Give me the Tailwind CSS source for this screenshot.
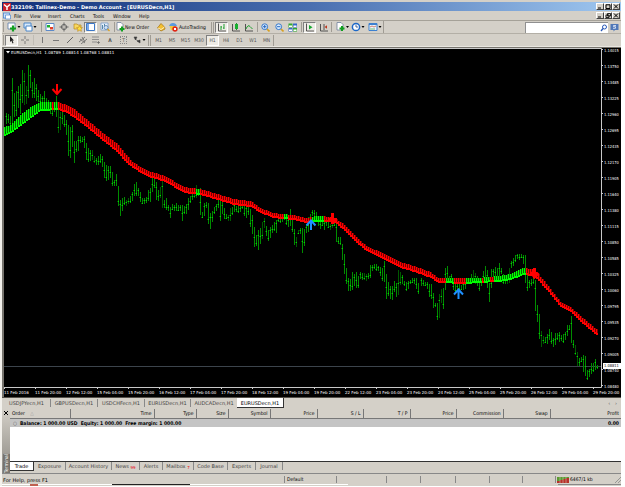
<!DOCTYPE html>
<html lang="en">
<head>
  <meta charset="UTF-8" />
  <meta name="viewport" content="width=device-width, initial-scale=1.0" />
  <title>332109: Tallinex-Demo - Demo Account - [EURUSDecn,H1]</title>
  <script src="https://cdn.jsdelivr.net/npm/@tailwindcss/browser@4"></script>
</head>
<body class="bg-white pr-1 font-['DejaVu_Sans_Condensed','DejaVu_Sans',sans-serif] text-[5px] leading-[8px] text-black">
<div class="bg-[#d4d0c8] border-l-2 border-[#f3f1ec]">

  <!-- Title bar -->
  <header class="pt-[2px]">
    <div class="h-[9px] flex items-center bg-linear-to-r from-[#12307a] via-[#4a6fb0] to-[#a0c8f0] text-white font-bold font-['DejaVu_Sans',sans-serif] px-px">
      <svg class="w-2 h-2" viewBox="0 0 8 8"><rect width="8" height="8" fill="#c8202c"/><path d="M1 1.500l3 2.500 3-2.500M4 4v3" stroke="#fff" stroke-width="1.500" fill="none"/></svg>
      <h1 class="flex-1 whitespace-nowrap">332109: Tallinex-Demo - Demo Account - [EURUSDecn,H1]</h1>
      <div class="flex">
        <button aria-label="Minimize" class="w-2 h-[7px] bg-[#d4d0c8] border border-t-white border-l-white border-r-[#404040] border-b-[#404040]"><svg viewBox="0 0 6 5"><path d="M1 4h3" stroke="#000"/></svg></button>
        <button aria-label="Maximize" class="w-2 h-[7px] bg-[#d4d0c8] border border-t-white border-l-white border-r-[#404040] border-b-[#404040]"><svg viewBox="0 0 6 5"><path d="M1 .8h4v3.700H1z" stroke="#000" fill="none"/></svg></button>
        <button aria-label="Close" class="w-2 h-[7px] bg-[#d4d0c8] border border-t-white border-l-white border-r-[#404040] border-b-[#404040]"><svg viewBox="0 0 6 5"><path d="M1 .5l4 4M5 .5l-4 4" stroke="#000"/></svg></button>
      </div>
    </div>
  </header>

  <!-- Menu -->
  <nav class="h-[10px] flex items-center border-b border-[#a5a198] px-px">
    <svg class="w-2 h-2 mr-[3px]" viewBox="0 0 8 8"><rect x=".5" y="1" width="6" height="5" fill="#cfe2fa" stroke="#4a86d0" stroke-width=".8"/><path d="M2.500 3h5v4h-5z" fill="#fff" stroke="#4a86d0" stroke-width=".7"/></svg>
    <a href="#" class="w-4">File</a>
    <a href="#" class="w-[18px]">View</a>
    <a href="#" class="w-[22px]">Insert</a>
    <a href="#" class="w-[23px]">Charts</a>
    <a href="#" class="w-5">Tools</a>
    <a href="#" class="w-[26px]">Window</a>
    <a href="#" class="flex-1">Help</a>
    <div class="flex">
      <button aria-label="Minimize chart" class="w-2 h-[7px] border border-t-white border-l-white border-r-[#404040] border-b-[#404040]"><svg viewBox="0 0 6 5"><path d="M1 4h3" stroke="#000"/></svg></button>
      <button aria-label="Restore chart" class="w-2 h-[7px] border border-t-white border-l-white border-r-[#404040] border-b-[#404040]"><svg viewBox="0 0 6 5"><path d="M2.500.5h3v2.500h-3zM1 2h3v2.500H1z" stroke="#000" stroke-width=".8" fill="none"/></svg></button>
      <button aria-label="Close chart" class="w-2 h-[7px] border border-t-white border-l-white border-r-[#404040] border-b-[#404040]"><svg viewBox="0 0 6 5"><path d="M1 .5l4 4M5 .5l-4 4" stroke="#000"/></svg></button>
    </div>
  </nav>

  <!-- Main toolbar -->
  <div class="h-[13px] flex items-center border-b border-[#b3afa6]">
    <i class="w-px h-[10px] mx-px bg-[#a09c94]"></i>
    <button aria-label="New chart" class="w-[18px] pl-[2px]"><svg class="w-[14px] h-[10px]" viewBox="0 0 14 10"><path d="M1 1h7v6H1z" fill="#fff" stroke="#5a7ca8" stroke-width=".8"/><path d="M6 3.500v6M3 6.500h6" stroke="#12a020" stroke-width="2.200"/><path d="M10.500 4h3L12 6z"/></svg></button>
    <button aria-label="Profiles" class="w-[17px]"><svg class="w-[14px] h-[10px]" viewBox="0 0 14 10"><path d="M1 1h7v5H1z" fill="#d8eafc" stroke="#4a86c8"/><path d="M3 4h6v5H3z" fill="#fff" stroke="#4a86c8"/><path d="M10.500 4h3L12 6z"/></svg></button>
    <i class="w-px h-[10px] mx-px bg-[#a09c94]"></i>
    <button aria-label="Market watch" class="w-[14px] flex justify-center"><svg class="w-[10px] h-[10px]" viewBox="0 0 10 10"><path d="M1 1.500h8v7H1z" fill="#fff" stroke="#5c8ac8"/><path d="M2 3h3v2.500H2z" fill="#20b030"/><path d="M5 5h3v2.500H5z" fill="#e04028"/></svg></button>
    <button aria-label="Data window" class="w-[14px] flex justify-center"><svg class="w-[10px] h-[10px]" viewBox="0 0 10 10"><circle cx="5" cy="5" r="2.600" fill="none" stroke="#666"/><path d="M5 .5v9M.5 5h9" stroke="#666"/><circle cx="5" cy="5" r="1" fill="#d4d0c8"/></svg></button>
    <button aria-label="Navigator" class="w-[13px] flex justify-center"><svg class="w-[10px] h-[10px]" viewBox="0 0 10 10"><path d="M1 2h3l1 1h3v4H1z" fill="#f8d860" stroke="#b88a20" stroke-width=".7"/><path d="M6.500 3.500l.9 1.900 2.100.2-1.500 1.500.4 2.200-1.900-1-1.900 1 .4-2.200L3.500 5.600l2.100-.2z" fill="#ffe040" stroke="#c08820" stroke-width=".6"/></svg></button>
    <button aria-label="Terminal" class="w-[13px] h-[11px] flex justify-center items-center bg-[#eeece6] border border-t-[#808080] border-l-[#808080] border-white"><svg class="w-[9px] h-[8px]" viewBox="0 0 9 8"><path d="M.5.5h8v7h-8z" fill="#fff" stroke="#3c78c8"/><path d="M1 1h2v6H1z" fill="#7aa8e8"/></svg></button>
    <button aria-label="Strategy tester" class="w-[15px] flex justify-center"><svg class="w-[10px] h-[10px]" viewBox="0 0 10 10"><path d="M1 1h7v7H1z" fill="#e8f2fc" stroke="#7a9cc8" stroke-width=".8"/><path d="M2.500 3v4M4.500 2v3" stroke="#58a"/><circle cx="6" cy="5.500" r="2" fill="#cfe4fa" stroke="#5880b0" stroke-width=".8"/><path d="M7.500 7l2 2" stroke="#d8a020" stroke-width="1.300"/></svg></button>
    <i class="w-px h-[10px] mr-px ml-[2px] bg-[#a09c94]"></i>
    <button class="w-[38px] flex items-center whitespace-nowrap"><svg class="w-[9px] h-[10px]" viewBox="0 0 9 10"><path d="M1 .5h4l2 2V8H1z" fill="#fff" stroke="#70809c" stroke-width=".8"/><path d="M6 4.500v5M3.500 7h5" stroke="#12a020" stroke-width="2"/></svg>New Order</button>
    <button aria-label="MetaEditor" class="w-[14px] flex justify-center"><svg class="w-[10px] h-[10px]" viewBox="0 0 10 10"><path d="M1.500 6L5 1.500 8.500 5 9 7 5 9z" fill="#f4c030" stroke="#a87818" stroke-width=".8"/><path d="M2 6l3 1.500L8.500 5" stroke="#fff" stroke-width=".7" fill="none"/></svg></button>
    <button class="w-[43px] flex items-center whitespace-nowrap"><svg class="w-[10px] h-[10px] mr-px" viewBox="0 0 10 10"><path d="M1 4q1-3 4-3t4 3z" fill="#5a9ae0"/><path d="M1.500 4h6L7 8H3z" fill="#f4c838"/><circle cx="7" cy="7" r="2.700" fill="#e02818"/><path d="M6 6h2v2H6z" fill="#fff"/></svg>AutoTrading</button>
    <i class="w-px h-[11px] bg-[#a09c94]"></i><i class="w-px h-[11px] mx-px bg-[#a09c94]"></i>
    <button aria-label="Bar chart" class="w-[13px] h-[11px] flex justify-center items-center bg-[#eeece6] border border-t-[#808080] border-l-[#808080] border-white"><svg class="w-[9px] h-[9px]" viewBox="0 0 9 9"><path d="M1.500.5V8H9" stroke="#444" stroke-width=".9" fill="none"/><path d="M4 3v4M4 4h1M7 1v5M6 5h1" stroke="#20a030"/></svg></button>
    <button aria-label="Candlesticks" class="w-[14px] flex justify-center"><svg class="w-[9px] h-[9px]" viewBox="0 0 9 9"><path d="M1.500 1v7H9" stroke="#444" stroke-width=".9" fill="none"/><path d="M5.500 0v7" stroke="#0a6a18" stroke-width=".8"/><path d="M4 1h3v5H4z" fill="#18b030"/></svg></button>
    <button aria-label="Line chart" class="w-[13px] flex justify-center"><svg class="w-[9px] h-[9px]" viewBox="0 0 9 9"><path d="M1.500 1v7H9" stroke="#444" stroke-width=".9" fill="none"/><path d="M2 6q2-5 4-2.500L8.500 6" stroke="#20a030" fill="none"/></svg></button>
    <i class="w-px h-[10px] mr-px ml-[2px] bg-[#a09c94]"></i>
    <button aria-label="Zoom in" class="w-[13px] flex justify-center"><svg class="w-[9px] h-[9px]" viewBox="0 0 9 9"><path d="M5.500 5.500l3 3" stroke="#d8a020" stroke-width="1.600"/><circle cx="3.700" cy="3.700" r="2.900" fill="#d8ecff" stroke="#3878c8"/><path d="M3.700 2v3.400M2 3.700h3.400" stroke="#2868c0"/></svg></button>
    <button aria-label="Zoom out" class="w-[14px] flex justify-center"><svg class="w-[9px] h-[9px]" viewBox="0 0 9 9"><path d="M5.500 5.500l3 3" stroke="#d8a020" stroke-width="1.600"/><circle cx="3.700" cy="3.700" r="2.900" fill="#d8ecff" stroke="#3878c8"/><path d="M2 3.700h3.400" stroke="#2868c0"/></svg></button>
    <button aria-label="Tile windows" class="w-[13px] flex justify-center"><svg class="w-[9px] h-[9px]" viewBox="0 0 9 9"><path d="M.5.5h4v4h-4z" fill="#30a830"/><path d="M5 .5h4v4H5z" fill="#3468c8"/><path d="M.5 5h4v3.500h-4z" fill="#3468c8"/><path d="M5 5h4v3.500H5z" fill="#30a830"/><path d="M1 2.500h3v1.500H1zM5.500 2.500h3v1.500h-3zM1 6.500h3V8H1zM5.500 6.500h3V8h-3z" fill="#fff"/></svg></button>
    <i class="w-px h-[10px] mr-px ml-[2px] bg-[#a09c94]"></i>
    <button aria-label="Auto scroll" class="w-[13px] h-[11px] flex justify-center items-center bg-[#eeece6] border border-t-[#808080] border-l-[#808080] border-white"><svg class="w-[9px] h-[9px]" viewBox="0 0 9 9"><path d="M1.500.5V8H9" stroke="#444" stroke-width=".9" fill="none"/><path d="M4 2l3.500 2.300L4 6.600z" fill="#18a830"/></svg></button>
    <button aria-label="Chart shift" class="w-[14px] flex justify-center"><svg class="w-[9px] h-[9px]" viewBox="0 0 9 9"><path d="M1.500 1v7H9M5 1v6" stroke="#444" stroke-width=".9" fill="none"/><path d="M5.500 4L8 2.300v3.400z" fill="#c03820"/></svg></button>
    <i class="w-px h-[10px] mx-px bg-[#a09c94]"></i>
    <button aria-label="Indicators" class="w-[17px] flex justify-center"><svg class="w-[14px] h-[10px]" viewBox="0 0 14 10"><path d="M2 .5h4l2 2V8H2z" fill="#fff" stroke="#70809c" stroke-width=".8"/><path d="M7 4v5M4.500 6.500h5" stroke="#12a020" stroke-width="2"/><path d="M11 4h3l-1.500 2z"/></svg></button>
    <button aria-label="Periods" class="w-[16px] flex justify-center"><svg class="w-[14px] h-[10px]" viewBox="0 0 14 10"><circle cx="5" cy="5" r="3.600" fill="#fff" stroke="#1c68c8" stroke-width="1.500"/><path d="M5 2.700V5h2" stroke="#1c4888" stroke-width=".8" fill="none"/><path d="M10.500 4h3L12 6z"/></svg></button>
    <button aria-label="Templates" class="w-[17px] flex justify-center"><svg class="w-[14px] h-[10px]" viewBox="0 0 14 10"><path d="M1 1.500h8v7H1z" fill="#eaf4ff" stroke="#3c80d0"/><path d="M1 2.500h8" stroke="#3c80d0"/><path d="M2 5l2-1 2 1 2-1" stroke="#c05030" stroke-width=".7" fill="none"/><path d="M2 7h5" stroke="#30a040" stroke-width=".7"/><path d="M10.500 4h3L12 6z"/></svg></button>
    <i class="w-px h-[12px] bg-[#a09c94]"></i>
    <label class="ml-auto flex items-center bg-white border-t border-l border-[#909090] h-[11px] w-[83px]">
      <input type="text" aria-label="Search" class="min-w-0 flex-1 h-[8px] outline-none" />
      <svg class="w-[8px] h-[8px]" viewBox="0 0 8 8"><circle cx="4.500" cy="3" r="2" fill="#fff" stroke="#2858b8"/><path d="M3 4.500L1 7" stroke="#2858b8" stroke-width="1.300"/></svg>
    </label>
    <button aria-label="Messages" class="w-[13px] flex justify-center"><svg class="w-[9px] h-[9px]" viewBox="0 0 9 9"><path d="M.5 1h8v6H5L3.500 8.500V7h-3z" fill="#5078b8"/><path d="M6 2.500H3.500v1.200h2v1.600H3" stroke="#e8f0fc" stroke-width=".8" fill="none"/></svg></button>
  </div>

  <!-- Line studies and periods toolbar -->
  <div class="h-[13px] flex items-center text-[#555] border-b border-[#e8e6e0]">
    <i class="w-px h-[10px] mx-px bg-[#a09c94]"></i>
    <button aria-label="Cursor" class="w-[13px] h-[11px] flex justify-center items-center bg-[#eeece6] border border-t-[#808080] border-l-[#808080] border-white"><svg class="w-[7px] h-[8px]" viewBox="0 0 7 8"><path d="M2 0v6l1.400-1.200L4.500 7.500l1-.5-1-2.500H6z" fill="#222"/></svg></button>
    <button aria-label="Crosshair" class="w-[14px] flex justify-center"><svg class="w-[8px] h-[8px]" viewBox="0 0 8 8"><path d="M4 0v3M4 5v3M0 4h3M5 4h3" stroke="#666" stroke-width=".8"/></svg></button>
    <i class="w-px h-[10px] mx-px bg-[#c0bcb4]"></i>
    <button aria-label="Vertical line" class="w-[14px] flex justify-center"><svg class="w-[8px] h-[8px]" viewBox="0 0 8 8"><path d="M4.500 1v6" stroke="#777"/></svg></button>
    <button aria-label="Horizontal line" class="w-[14px] flex justify-center"><svg class="w-[8px] h-[8px]" viewBox="0 0 8 8"><path d="M1 4.500h6" stroke="#777"/></svg></button>
    <button aria-label="Trendline" class="w-[13px] flex justify-center"><svg class="w-[8px] h-[8px]" viewBox="0 0 8 8"><path d="M1 7l6-6" stroke="#666"/></svg></button>
    <button aria-label="Channel" class="w-[13px] flex justify-center"><svg class="w-[8px] h-[8px]" viewBox="0 0 8 8"><path d="M0 6l6-5M2 8l6-5M1 3l5 4M3 1l3 5" stroke="#666" stroke-width=".8"/></svg></button>
    <button aria-label="Fibonacci" class="w-[14px] flex justify-center"><svg class="w-[8px] h-[8px]" viewBox="0 0 8 8"><path d="M0 1h7M0 3.500h7M0 6h5" stroke="#888" stroke-width=".9"/><path d="M6.500 5v3M5 6.500h3" stroke="#666" stroke-width=".7"/></svg></button>
    <button class="w-[14px] font-bold">A</button>
    <button class="w-[13px] flex justify-center"><span class="w-[7px] h-[8px] leading-[6px] border border-dotted border-[#888]">T</span></button>
    <button aria-label="Arrows" class="w-[18px] flex justify-center"><svg class="w-[13px] h-[8px]" viewBox="0 0 13 8"><path d="M1 1l3 0-1.500 3zM2 3l3 2M4 5l3-1v3z" fill="#333" stroke="#444" stroke-width=".6"/><path d="M9.500 3h3L11 5z" fill="#000"/></svg></button>
    <i class="w-px h-[11px] bg-[#a09c94]"></i><i class="w-px h-[11px] mx-px bg-[#a09c94]"></i>
    <button class="w-[13px]">M1</button>
    <button class="w-[14px]">M5</button>
    <button class="w-[13px]">M15</button>
    <button class="w-[14px]">M30</button>
    <button class="w-[13px] h-[11px] leading-[8px] bg-[#eeece6] border border-t-[#808080] border-l-[#808080] border-white">H1</button>
    <button class="w-[14px]">H4</button>
    <button class="w-[13px]">D1</button>
    <button class="w-[14px]">W1</button>
    <button class="w-[13px]">MN</button>
    <i class="w-px h-[11px] bg-[#a09c94]"></i>
  </div>

  <!-- Chart -->
  <main class="bg-black border-t border-l-2 border-[#77746e]">
    <svg id="chart" class="block w-full h-auto" viewBox="4 48 617 349" font-family="'DejaVu Sans Condensed','DejaVu Sans',sans-serif" font-size="4" fill="#fff">
      <path d="M4 48.500H601.500V387.500H4" fill="none" stroke="#c8c8c8"/>
      <path d="M4 366.500H601" stroke="#3c444c"/>
      <path d="M6 51h4l-2 2.500z"/>
      <text x="11" y="54" font-family="'DejaVu Sans',sans-serif">EURUSDecn,H1&#160; 1.08789 1.08814 1.08768 1.08811</text>
      <g id="bars"></g>
      <g id="band"></g>
      <g fill="none" stroke="#ff0000" stroke-width="2">
        <path d="M57 84v9M52.500 89l4.500 5 4.500-5"/>
        <path d="M332.500 213v11M328 219.500h9" stroke-width="3"/>
        <path d="M534.500 268v10M531 272l3.500 5 4-4" stroke-width="3"/>
      </g>
      <g fill="none" stroke="#1e90ff" stroke-width="2">
        <path d="M311 230v-10M306.500 225.500l4.500-5 4.500 5"/>
        <path d="M458.500 299v-10M454 294.500l4.500-5 4.500 5"/>
      </g>
      <g id="prices"></g>
      <g id="dates"></g>
      <rect x="603" y="363" width="18" height="6"/>
      <text x="604" y="367" fill="#000">1.08811</text>
    </svg>
  </main>

  <!-- Chart tabs -->
  <nav class="h-3 flex items-start border-t border-[#55524c] font-['DejaVu_Sans',sans-serif] text-[#444] whitespace-nowrap">
    <a href="#" class="w-[48px] mt-px pl-[7px]">USDJPYecn,H1</a>
    <a href="#" class="w-[47px] mt-px text-center border-l border-[#888]">GBPUSDecn,H1</a>
    <a href="#" class="w-[47px] mt-px text-center border-l border-[#888]">USDCHFecn,H1</a>
    <a href="#" class="w-[46px] mt-px text-center border-l border-[#888]">EURUSDecn,H1</a>
    <a href="#" class="w-[47px] mt-px text-center border-l border-[#888]">AUDCADecn,H1</a>
    <a href="#" class="w-[47px] h-[10px] pt-px text-center bg-white text-black border-r border-b border-[#333]">EURUSDecn,H1</a>
    <span class="ml-auto mr-1 mt-px text-[#666]">‹ &nbsp; ›</span>
  </nav>

  <!-- Terminal -->
  <section class="flex">
    <aside class="w-2 shrink-0 flex flex-col items-center justify-between bg-linear-to-b from-[#d4d0c8] to-[#8c8982]">
      <button aria-label="Close terminal" class="w-[6px] h-[7px] flex items-center"><svg viewBox="0 0 6 6"><path d="M1 1l4 4M5 1L1 5" stroke="#000"/></svg></button>
      <span class="[writing-mode:vertical-rl] rotate-180 text-white bg-[#77746e] leading-[7px]">Terminal</span>
    </aside>
    <div class="flex-1 min-w-0 bg-white">
      <table class="w-full table-fixed border-collapse">
        <colgroup><col class="w-[60px]" /><col class="w-[84px]" /><col class="w-[42px]" /><col class="w-8" /><col class="w-[42px]" /><col class="w-[47px]" /><col class="w-[46px]" /><col class="w-[47px]" /><col class="w-[46px]" /><col class="w-[47px]" /><col class="w-[47px]" /><col /></colgroup>
        <thead class="bg-[#d4d0c8] text-right">
          <tr class="h-[9px] border-b border-[#777]">
            <th class="font-normal text-left pl-[2px] border-r border-[#777]">Order <span class="pl-1 text-[#999]">△</span></th>
            <th class="font-normal pr-[2px] border-r border-[#777]">Time</th>
            <th class="font-normal pr-[2px] border-r border-[#777]">Type</th>
            <th class="font-normal pr-[2px] border-r border-[#777]">Size</th>
            <th class="font-normal pr-[2px] border-r border-[#777]">Symbol</th>
            <th class="font-normal pr-[2px] border-r border-[#777]">Price</th>
            <th class="font-normal pr-[2px] border-r border-[#777]">S / L</th>
            <th class="font-normal pr-[2px] border-r border-[#777]">T / P</th>
            <th class="font-normal pr-[2px] border-r border-[#777]">Price</th>
            <th class="font-normal pr-[2px] border-r border-[#777]">Commission</th>
            <th class="font-normal pr-[2px] border-r border-[#777]">Swap</th>
            <th class="font-normal pr-[2px]">Profit</th>
          </tr>
        </thead>
        <tbody>
          <tr class="h-[9px] bg-[#c4c4c4] font-bold">
            <td colspan="11" class="pl-[3px] whitespace-nowrap"><span class="font-normal pr-[3px] text-[#555]">○</span>Balance: 1 000.00 USD&nbsp; Equity: 1 000.00&nbsp; Free margin: 1 000.00</td>
            <td class="text-right pr-[2px]">0.00</td>
          </tr>
        </tbody>
      </table>
      <div class="h-[34px]"></div>
      <nav class="h-3 flex items-start bg-[#d4d0c8] border-t border-[#333] font-['DejaVu_Sans',sans-serif] text-[#444] whitespace-nowrap">
        <a href="#" class="w-6 h-[9px] text-center bg-white text-black border-r border-b border-[#333]">Trade</a>
        <a href="#" class="w-8 text-center border-r border-[#888]">Exposure</a>
        <a href="#" class="w-[46px] text-center border-r border-[#888]">Account History</a>
        <a href="#" class="w-[28px] text-center border-r border-[#888]">News <sub class="text-[4px] text-red-600">99</sub></a>
        <a href="#" class="w-[23px] text-center border-r border-[#888]">Alerts</a>
        <a href="#" class="w-[31px] text-center border-r border-[#888]">Mailbox <sub class="text-[4px] text-red-600">7</sub></a>
        <a href="#" class="w-[34px] text-center border-r border-[#888]">Code Base</a>
        <a href="#" class="w-7 text-center border-r border-[#888]">Experts</a>
        <a href="#" class="w-[27px] text-center border-r border-[#888]">Journal</a>
      </nav>
    </div>
  </section>

  <!-- Status bar -->
  <footer class="border-t border-[#888] pt-[2px] pb-px flex items-center h-[11px]">
    <span class="w-[282px] pl-px font-['DejaVu_Sans',sans-serif]">For Help, press F1</span>
    <span class="w-[52px] h-[7px] leading-[7px] pl-[2px] border-l border-[#888]">Default</span>
    <i class="w-[50px] h-[7px] border-l border-[#888]"></i>
    <i class="w-[34px] h-[7px] border-l border-[#888]"></i>
    <i class="w-[35px] h-[7px] border-l border-[#888]"></i>
    <i class="w-[34px] h-[7px] border-l border-[#888]"></i>
    <i class="w-[33px] h-[7px] border-l border-[#888]"></i>
    <i class="w-[33px] h-[7px] border-l border-[#888]"></i>
    <span class="flex flex-1 h-[7px] leading-[7px] items-center border-l border-[#888] pl-px whitespace-nowrap">
      <svg class="w-3 h-[6px] mr-px" viewBox="0 0 12 6"><path d="M0 0h12v6H0z" fill="#5c9a30"/><path d="M0 4h3V3h3V2h3V1h3v5H0z" fill="#b83028"/><path d="M3 0v6M6 0v6M9 0v6" stroke="#d4d0c8" stroke-width=".5"/></svg>6467/1 kb
    </span>
    <svg class="w-[6px] h-[6px]" viewBox="0 0 6 6"><path d="M0 6l6-6M3 6l3-3" stroke="#888" stroke-width=".8"/></svg>
  </footer>

  <!-- Top edge of the desktop taskbar -->
  <div class="h-[2px] flex bg-[#d4d0c8]">
    <i class="w-7 border-t border-white"></i>
    <i class="w-2 bg-[#c06050]"></i>
    <i class="w-[74px] border-t border-white"></i>
    <i class="w-[78px] border-t border-[#222]"></i>
    <i class="w-[78px] border-t border-white"></i>
    <i class="w-[80px] border-t border-white"></i>
    <i class="w-[210px]"></i>
    <i class="flex-1 border-t border-[#888]"></i>
  </div>
</div>

<script>
  // high-low pairs, one bar every two pixels
  const runs = [
    { x: 6, bars: "113-124 114-123 116-125 78-126 93-117 91-116 86-108 84-114 70-103 73-105 86-104 65-98 70-88 82-98 78-98 84-101 90-102 94-103 96-104 91-104 98-104 100-106 102-114 103-116 104-112 96-117 110-133 112-130 112-124 115-127 120-135 125-156 127-158 125-147 141-163 141-152 136-151 136-143 137-142 136-148 143-160 148-162 150-161 150-160 156-163 158-165 156-165 154-163 156-167 162-178 165-181 166-180 166-178 172-186 180-186 174-186 186-206 200-216 198-211 197-205 200-206 198-204 196-203 192-201 184-196 182-196 188-196 192-202 198-204 198-204 197-203 190-201 188-202 176-192 176-188 182-200 190-201 187-198 178-208 200-208 198-210 205-211 207-218 204-210 205-211 203-211 205-211 205-211 205-221 206-214 204-214 198-210 196-203 194-200 193-198 185-198 190-196 188-215 212-218 203-216 202-208 203-224 213-229 211-222 207-214 204-211 200-208 201-221 202-214 208-219 214-219 215-221 208-221 207-215 203-212 206-212 205-213 206-212 204-209 205-216 205-218 206-215 209-227 215-234 227-247 235-246 230-250 228-244 222-239 218-228 226-236 230-241 227-238 225-233 222-231 220-233 218-222 216-223 216-222 216-220 216-225 218-227 209-226 218-232 229-245 237-247 230-234 228-234 228-253 229-246 225-233 217-232 214-218 210-216 210-216 212-222 216-226 218-229 220-226 220-230 218-226 222-228 224-230 222-228 220-226 222-242 237-244 237-245 244-260 254-274 268-284 278-291 279-291 272-290 274-286 272-288 276-288 272-279 273-280 273-280 274-281 273-279 265-278 265-271 264-269 264-271 266-271 267-276 268-281 261-282 274-299 282-296 286-299 286-300 281-292 283-297 270-295 272-285 275-284 281-286 282-291 281-289 280-284 278-283 278-284 278-289 283-294" },
    { x: 421, bars: "278-286 280-286 282-286 282-289 284-297 284-299 293-308 303-307 303-320 294-318 289-303 288-309 268-290 266-280 276-282 274-281 281-290 282-293 284-291 284-291 285-290 282-290 278-289 280-284 278-283 274-284 270-282 273-284 276-286 280-291 278-286 271-281 266-280 270-288 283-302 269-288 269-278 267-276 268-281 263-281 268-274 274-284 276-284 274-284 268-283 261-268 258-266 255-262 254-259 254-260 254-258 255-264 255-283 275-291 280-288 279-286 276-284 280-311 305-322 314-339 331-347 336-344 337-343 334-344 329-340 332-344 338-347 333-345 333-340 332-342 335-341 334-343 332-340 325-336 325-330 316-343 340-348 345-355 352-366 358-366 357-362 355-372 356-376 370-380 369-377 363-374 363-372 359-370 365-369" }
  ];

  // moving average ribbon: x, top, bottom
  const ribbon = [[4,127,136],[10,125,133],[20,115,126],[30,107,118],[40,102,111],[57,102,110],[66,105,113],[75,110,119],[88,121,129],[100,131,139],[110,139,147],[117,144,153],[125,154,162],[132,162,168],[145,170,176],[155,173,179],[165,176,182],[183,187,193],[200,189,195],[220,195,201],[233,199,205],[250,201,207],[260,208,213],[273,213,218],[293,215,220],[306,218,223],[316,216,222],[333,217,222],[343,224,230],[350,231,237],[357,238,244],[367,247,252],[383,253,259],[397,261,267],[413,266,272],[430,272,278],[438,278,283],[463,278,284],[477,278,283],[497,276,282],[510,274,280],[523,268,275],[533,269,276],[537,273,280],[547,285,291],[560,302,307],[570,307,312],[580,316,322],[598,331,337]];
  const rising = [[4,52],[54,58],[196,200],[284,287],[312,324],[446,454],[465,481],[484,489],[493,525]];

  let out = "";
  for (const run of runs) {
    run.bars.split(" ").forEach((pair, i) => {
      const [hi, lo] = pair.split("-").map(Number);
      const x = run.x + i * 2;
      const mid = hi + Math.round((lo - hi) * (i % 3 + 1) / 4);
      const dim = i % 17 === 9 || i % 17 === 10;
      out += `<rect x="${x}" y="${hi}" width="1" height="${lo - hi}" fill="${dim ? "#005800" : "#008c00"}"/>` +
             `<rect x="${x}" y="${mid}" width="1" height="1" fill="#00d800"/>` +
             `<rect x="${x - 1}" y="${mid}" width="1" height="1" fill="#005000"/>`;
    });
  }
  document.getElementById("bars").innerHTML = out;

  out = "";
  for (let x = 4, k = 0; x < 598; x += 2) {
    while (x >= ribbon[k + 1][0]) k++;
    const a = ribbon[k], b = ribbon[k + 1];
    const t = (x - a[0]) / (b[0] - a[0]);
    const top = Math.round(a[1] + (b[1] - a[1]) * t);
    const bottom = Math.round(a[2] + (b[2] - a[2]) * t);
    const green = rising.some(r => x >= r[0] && x < r[1]);
    const line = green ? "#00ff00" : "#ff0000";
    const gap = green ? "#006c00" : "#780000";
    out += `<rect x="${x}" y="${top}" width="2" height="${bottom - top}" fill="${gap}"/>` +
           `<rect x="${x}" y="${top}" width="1" height="${bottom - top}" fill="${line}"/>` +
           `<rect x="${x}" y="${bottom - 2}" width="2" height="2" fill="${line}"/>`;
  }
  document.getElementById("band").innerHTML = out;

  const prices = ["1.14015","1.13750","1.13485","1.13225","1.12960","1.12695","1.12435","1.12170","1.11905","1.11640","1.11380","1.11115","1.10850","1.10585","1.10325","1.10060","1.09795","1.09535","1.09270","1.09005","1.08740","1.08480"];
  document.getElementById("prices").innerHTML = prices.map((p, i) =>
    `<path d="M601 ${49.5 + i * 16}h2" stroke="#ccc"/><text x="604" y="${52 + i * 16}">${p}</text>`).join("");

  const dates = ["11 Feb 2016","11 Feb 20:00","12 Feb 12:00","15 Feb 04:00","15 Feb 20:00","16 Feb 12:00","17 Feb 04:00","17 Feb 20:00","18 Feb 12:00","19 Feb 04:00","19 Feb 20:00","22 Feb 12:00","23 Feb 04:00","23 Feb 20:00","24 Feb 12:00","25 Feb 04:00","25 Feb 20:00","26 Feb 12:00","29 Feb 04:00","29 Feb 20:00"];
  document.getElementById("dates").innerHTML = dates.map((d, i) =>
    `<path d="M${4.5 + i * 31} 387v2" stroke="#ccc"/><text x="${4 + i * 31}" y="394" font-family="'DejaVu Sans',sans-serif">${d}</text>`).join("");
</script>
</body>
</html>
